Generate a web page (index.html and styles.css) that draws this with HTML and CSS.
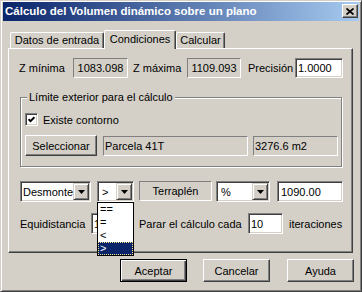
FILE: index.html
```html
<!DOCTYPE html>
<html lang="es">
<head>
  <meta charset="UTF-8">
  <title>Cálculo del Volumen dinámico sobre un plano</title>
  <link rel="stylesheet" href="styles.css">
</head>
<body>
  <div class="win">
    <div class="title">
      <span class="title-text">Cálculo del Volumen dinámico sobre un plano</span>
      <span class="close">
        <svg width="8" height="7" viewBox="0 0 8 7"><path d="M0.5 0.5L7.5 6.5M7.5 0.5L0.5 6.5" stroke="#000" stroke-width="1.7"/></svg>
      </span>
    </div>

    <div class="tabs">
      <div class="tab tab-datos">Datos de entrada</div>
      <div class="tab tab-on tab-cond">Condiciones</div>
      <div class="tab tab-calc">Calcular</div>
    </div>

    <div class="panel">
      <div class="row row-z">
        <span class="lbl lbl-zmin">Z mínima</span>
        <span class="static center zmin">1083.098</span>
        <span class="lbl lbl-zmax">Z máxima</span>
        <span class="static center zmax">1109.093</span>
        <span class="lbl lbl-prec">Precisión</span>
        <span class="edit prec">1.0000</span>
      </div>

      <div class="group">
        <span class="legend">Límite exterior para el cálculo</span>
        <div class="row row-check">
          <span class="check">
            <svg width="7" height="7" viewBox="0 0 7 7"><path d="M0.6 3.2L2.5 5.1L6.4 1.2" fill="none" stroke="#000" stroke-width="1.9"/></svg>
          </span>
          <span class="check-lbl">Existe contorno</span>
        </div>
        <div class="row row-sel">
          <span class="btn btn-sel">Seleccionar</span>
          <span class="static parcela">Parcela 41T</span>
          <span class="static area">3276.6 m2</span>
        </div>
      </div>

      <div class="row row-cond">
        <span class="combo c-desm">Desmonte<span class="arrow"><svg width="7" height="4" viewBox="0 0 7 4"><path d="M0 0H7L3.5 4Z"/></svg></span></span>
        <span class="combo c-op">&gt;<span class="arrow"><svg width="7" height="4" viewBox="0 0 7 4"><path d="M0 0H7L3.5 4Z"/></svg></span>
          <ul class="list">
            <li>==</li>
            <li>=</li>
            <li>&lt;</li>
            <li class="sel">&gt;</li>
          </ul>
        </span>
        <span class="static center terra">Terraplén</span>
        <span class="combo c-pct">%<span class="arrow"><svg width="7" height="4" viewBox="0 0 7 4"><path d="M0 0H7L3.5 4Z"/></svg></span></span>
        <span class="edit val">1090.00</span>
      </div>

      <div class="row row-eq">
        <span class="lbl lbl-eq">Equidistancia</span>
        <span class="edit eq">1</span>
        <span class="lbl lbl-parar">Parar el cálculo cada</span>
        <span class="edit iter">10</span>
        <span class="lbl lbl-iter">iteraciones</span>
      </div>
    </div>

    <div class="buttons">
      <span class="btn btn-def">Aceptar</span>
      <span class="btn btn-cancel">Cancelar</span>
      <span class="btn btn-help">Ayuda</span>
    </div>
  </div>
</body>
</html>
```

FILE: styles.css
```css
*{
  box-sizing: border-box;
  margin: 0;
  padding: 0;
}
body{
  background: #d4d0c8;
  font-family: "Liberation Sans", Arial, sans-serif;
  font-size: 11px;
  color: #000;
}
li{
  list-style: none;
}
.win{
  width: 362px;
  height: 292px;
  background: #d4d0c8;
  border: 1px solid;
  border-color: #d4d0c8 #404040 #404040 #d4d0c8;
  box-shadow: inset 1px 1px #fff, inset -1px -1px #808080;
  padding: 1px 2px 2px 2px;
}

/* barra de titulo */
.title{
  height: 19px;
  display: flex;
  align-items: flex-start;
  background: linear-gradient(to right, #0a246a, #a6caf0);
}
.title-text{
  flex: 1;
  padding-left: 2px;
  line-height: 19px;
  font-size: 11.5px;
  font-weight: bold;
  color: #fff;
  white-space: nowrap;
}
.close{
  width: 16px;
  height: 14px;
  margin: 2px 1px 0 0;
  display: flex;
  align-items: center;
  justify-content: center;
  background: #d4d0c8;
  border: 1px solid;
  border-color: #fff #404040 #404040 #fff;
  box-shadow: inset -1px -1px #808080;
}

/* pestañas */
.tabs{
  display: flex;
  align-items: flex-end;
  height: 18px;
  margin: 9px 0 0 7px;
}
.tab{
  height: 16px;
  line-height: 15px;
  text-align: center;
  border-top: 1px solid #fff;
  border-left: 1px solid #fff;
  border-right: 1px solid #404040;
  border-radius: 2px 2px 0 0;
  box-shadow: inset -1px 0 #808080;
  white-space: nowrap;
}
.tab-datos{ width: 94px; }
.tab-cond{ width: 72px; }
.tab-calc{ width: 49px; }
.tab-on{
  height: 19px;
  line-height: 16px;
  margin-bottom: -1px;
  position: relative;
  z-index: 1;
  background: #d4d0c8;
}
.panel{
  width: 345px;
  height: 205px;
  margin-left: 5px;
  border: 1px solid;
  border-color: #fff #404040 #404040 #fff;
  box-shadow: inset -1px -1px #808080;
}

/* controles */
.row{
  display: flex;
  align-items: center;
}
.row > span{
  flex: none;
  white-space: nowrap;
}
.static{
  height: 20px;
  display: flex;
  align-items: center;
  padding-left: 1px;
  border: 1px solid;
  border-color: #808080 #fff #fff #808080;
}
.static.center{
  justify-content: center;
  padding-left: 0;
}
.edit{
  height: 21px;
  display: flex;
  align-items: center;
  padding-left: 2px;
  background: #fff;
  border: 1px solid;
  border-color: #808080 #fff #fff #808080;
  box-shadow: inset 1px 1px #404040, inset -1px -1px #d4d0c8;
}
.btn{
  display: flex;
  align-items: center;
  justify-content: center;
  border: 1px solid;
  border-color: #fff #404040 #404040 #fff;
  box-shadow: inset -1px -1px #808080;
}

.row-z{
  height: 20px;
  margin-top: 9px;
  padding-left: 10px;
}
.lbl-zmin{ width: 54px; }
.zmin{ width: 55px; }
.lbl-zmax{ width: 54px; margin-left: 5px; }
.zmax{ width: 54px; }
.lbl-prec{ width: 47px; margin-left: 7px; }
.prec{ width: 48px; height: 20px; }

.group{
  position: relative;
  width: 322px;
  height: 70px;
  margin: 19px 0 0 11px;
  padding-left: 4px;
  border: 1px solid #808080;
  box-shadow: inset 1px 1px #fff, 1px 1px #fff;
}
.legend{
  position: absolute;
  top: -7px;
  left: 6px;
  padding: 0 2px;
  line-height: 13px;
  background: #d4d0c8;
}
.row-check{
  height: 13px;
  margin-top: 15px;
}
.check{
  width: 13px;
  height: 13px;
  display: flex;
  align-items: center;
  justify-content: center;
  background: #fff;
  border: 1px solid;
  border-color: #808080 #fff #fff #808080;
  box-shadow: inset 1px 1px #404040, inset -1px -1px #d4d0c8;
}
.check svg{
  display: block;
}
.check-lbl{ margin-left: 5px; }
.row-sel{
  height: 21px;
  margin-top: 9px;
  align-items: flex-start;
}
.btn-sel{ width: 72px; height: 21px; }
.parcela{ width: 145px; margin: 1px 0 0 6px; }
.area{ width: 85px; margin: 1px 0 0 5px; }

.row-cond{
  height: 21px;
  margin-top: 14px;
  padding-left: 11px;
  align-items: flex-start;
}
.combo{
  position: relative;
  height: 21px;
  display: flex;
  align-items: center;
  padding-left: 2px;
  background: #fff;
  border: 1px solid;
  border-color: #808080 #fff #fff #808080;
  box-shadow: inset 1px 1px #404040, inset -1px -1px #d4d0c8;
}
.arrow{
  width: 16px;
  height: 17px;
  margin: 0 1px 0 auto;
  display: flex;
  align-items: center;
  justify-content: center;
  background: #d4d0c8;
  border: 1px solid;
  border-color: #d4d0c8 #404040 #404040 #d4d0c8;
  box-shadow: inset 1px 1px #fff, inset -1px -1px #808080;
}
.arrow svg{
  display: block;
}
.c-desm{ width: 71px; }
.c-op{ width: 37px; margin-left: 6px; padding-left: 4px; }
.terra{ width: 73px; margin-left: 5px; }
.c-pct{ width: 54px; margin-left: 4px; padding-left: 4px; }
.val{ width: 66px; margin-left: 7px; padding-left: 3px; }

.list{
  position: absolute;
  top: 20px;
  left: -1px;
  z-index: 5;
  width: 37px;
  height: 54px;
  background: #fff;
  border: 1px solid #000;
}
.list li{
  height: 13px;
  line-height: 13px;
  padding-left: 2px;
}
.list li.sel{
  background: #0a246a;
  color: #fff;
  outline: 1px dotted #ffe88c;
  outline-offset: -1px;
}

.row-eq{
  height: 21px;
  margin-top: 11px;
  padding-left: 11px;
}
.lbl-eq{ width: 71px; }
.eq{ width: 40px; }
.lbl-parar{ width: 109px; margin-left: 8px; }
.iter{ width: 35px; }
.lbl-iter{ margin-left: 6px; }

.buttons{
  display: flex;
  margin-top: 6px;
  padding-left: 117px;
}
.buttons .btn{
  width: 67px;
  height: 23px;
}
.btn-def{
  border: 1px solid #000 !important;
  box-shadow: inset 1px 1px #fff, inset -1px -1px #404040, inset -2px -2px #808080 !important;
}
.btn-cancel{ margin-left: 16px; }
.btn-help{ margin-left: 17px; }
```
